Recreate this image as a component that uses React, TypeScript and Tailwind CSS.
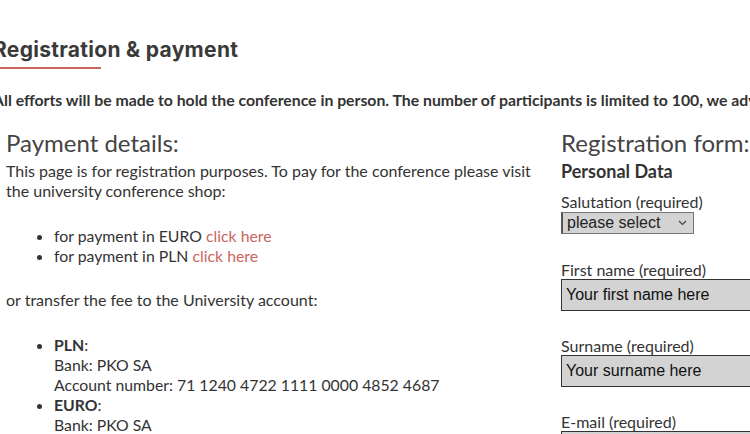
export default function App() {
  return (
    <div className="w-[750px] h-[434px] overflow-hidden bg-white text-[#333]" style={{ fontFamily: "Lato, 'Open Sans', sans-serif" }}>
      <div className="-ml-[7px] pt-[36px]">
        <h2 className="text-[21px] font-bold leading-[28px] text-[#3a3a3a] whitespace-nowrap" style={{ fontFamily: "Inter, 'Open Sans', sans-serif", letterSpacing: "0.3px" }}>
          Registration &amp; payment
        </h2>
        <div className="mt-[3px] h-[2px] w-[108px] bg-[#c9665f]" />
        <p className="mt-[21px] text-[15.8px] font-bold leading-[20px] whitespace-nowrap text-[#333]">
          All efforts will be made to hold the conference in person. The number of participants is limited to 100, we advise early registration.
        </p>
        <div className="flex mt-[18px]">
          <div className="w-[568px] shrink-0 pl-[13px] pr-[24px] text-[16px] leading-[20px] text-[#333]">
            <h3 className="text-[24px] leading-[30px] text-[#444] font-normal">Payment details:</h3>
            <p className="mt-[3px]">
              This page is for registration purposes. To pay for the conference please visit the university conference shop:
            </p>
            <ul className="mt-[25px] pl-[48px] list-disc leading-[19.5px] text-[15.8px]">
              <li>for payment in EURO <span className="text-[#c9665f]">click here</span></li>
              <li>for payment in PLN <span className="text-[#c9665f]">click here</span></li>
            </ul>
            <p className="mt-[25px]">or transfer the fee to the University account:</p>
            <ul className="mt-[25px] pl-[48px] list-disc text-[15.8px]">
              <li>
                <b>PLN</b>:<br />
                Bank: PKO SA<br />
                Account number: 71 1240 4722 1111 0000 4852 4687
              </li>
              <li>
                <b>EURO</b>:<br />
                Bank: PKO SA<br />
                Account number: PL 71 1240 4722 1111 0000 4852 4687
              </li>
            </ul>
          </div>
          <div className="shrink-0 w-[300px] text-[16px] leading-[20px] text-[#333]">
            <h3 className="text-[24px] leading-[30px] text-[#444] font-normal">Registration form:</h3>
            <h4 className="mt-[2px] text-[18px] font-bold leading-[22px] text-[#333]">Personal Data</h4>
            <div className="mt-[10px]">
              <div className="leading-[20px]">Salutation (required)</div>
              <div className="flex w-[133px] h-[22px] items-center justify-between bg-[#d3d3d3] border border-[#767676] border-l-[2px] border-l-[#555] pl-[4px] pr-[6px] text-[16px] text-[#222]" style={{ fontFamily: "'Liberation Sans', Arial, sans-serif" }}>
                <span>please select</span>
                <svg width="9" height="6" viewBox="0 0 9 6" fill="none"><path d="M1 1l3.5 3.5L8 1" stroke="#444" strokeWidth="1.2" /></svg>
              </div>
            </div>
            <div className="mt-[26px]">
              <div className="leading-[19px]">First name (required)</div>
              <div className="h-[32px] w-[260px] bg-[#d3d3d3] border border-[#333] flex items-center pl-[4px] text-[16px] text-[#111]" style={{ fontFamily: "'Liberation Sans', Arial, sans-serif" }}>
                Your first name here
              </div>
            </div>
            <div className="mt-[25px]">
              <div className="leading-[19px]">Surname (required)</div>
              <div className="h-[32px] w-[260px] bg-[#d3d3d3] border border-[#333] flex items-center pl-[4px] text-[16px] text-[#111]" style={{ fontFamily: "'Liberation Sans', Arial, sans-serif" }}>
                Your surname here
              </div>
            </div>
            <div className="mt-[25px]">
              <div className="leading-[19px]">E-mail (required)</div>
              <div className="h-[32px] w-[260px] bg-[#d3d3d3] border border-[#333]" />
            </div>
          </div>
        </div>
      </div>
    </div>
  );
}
